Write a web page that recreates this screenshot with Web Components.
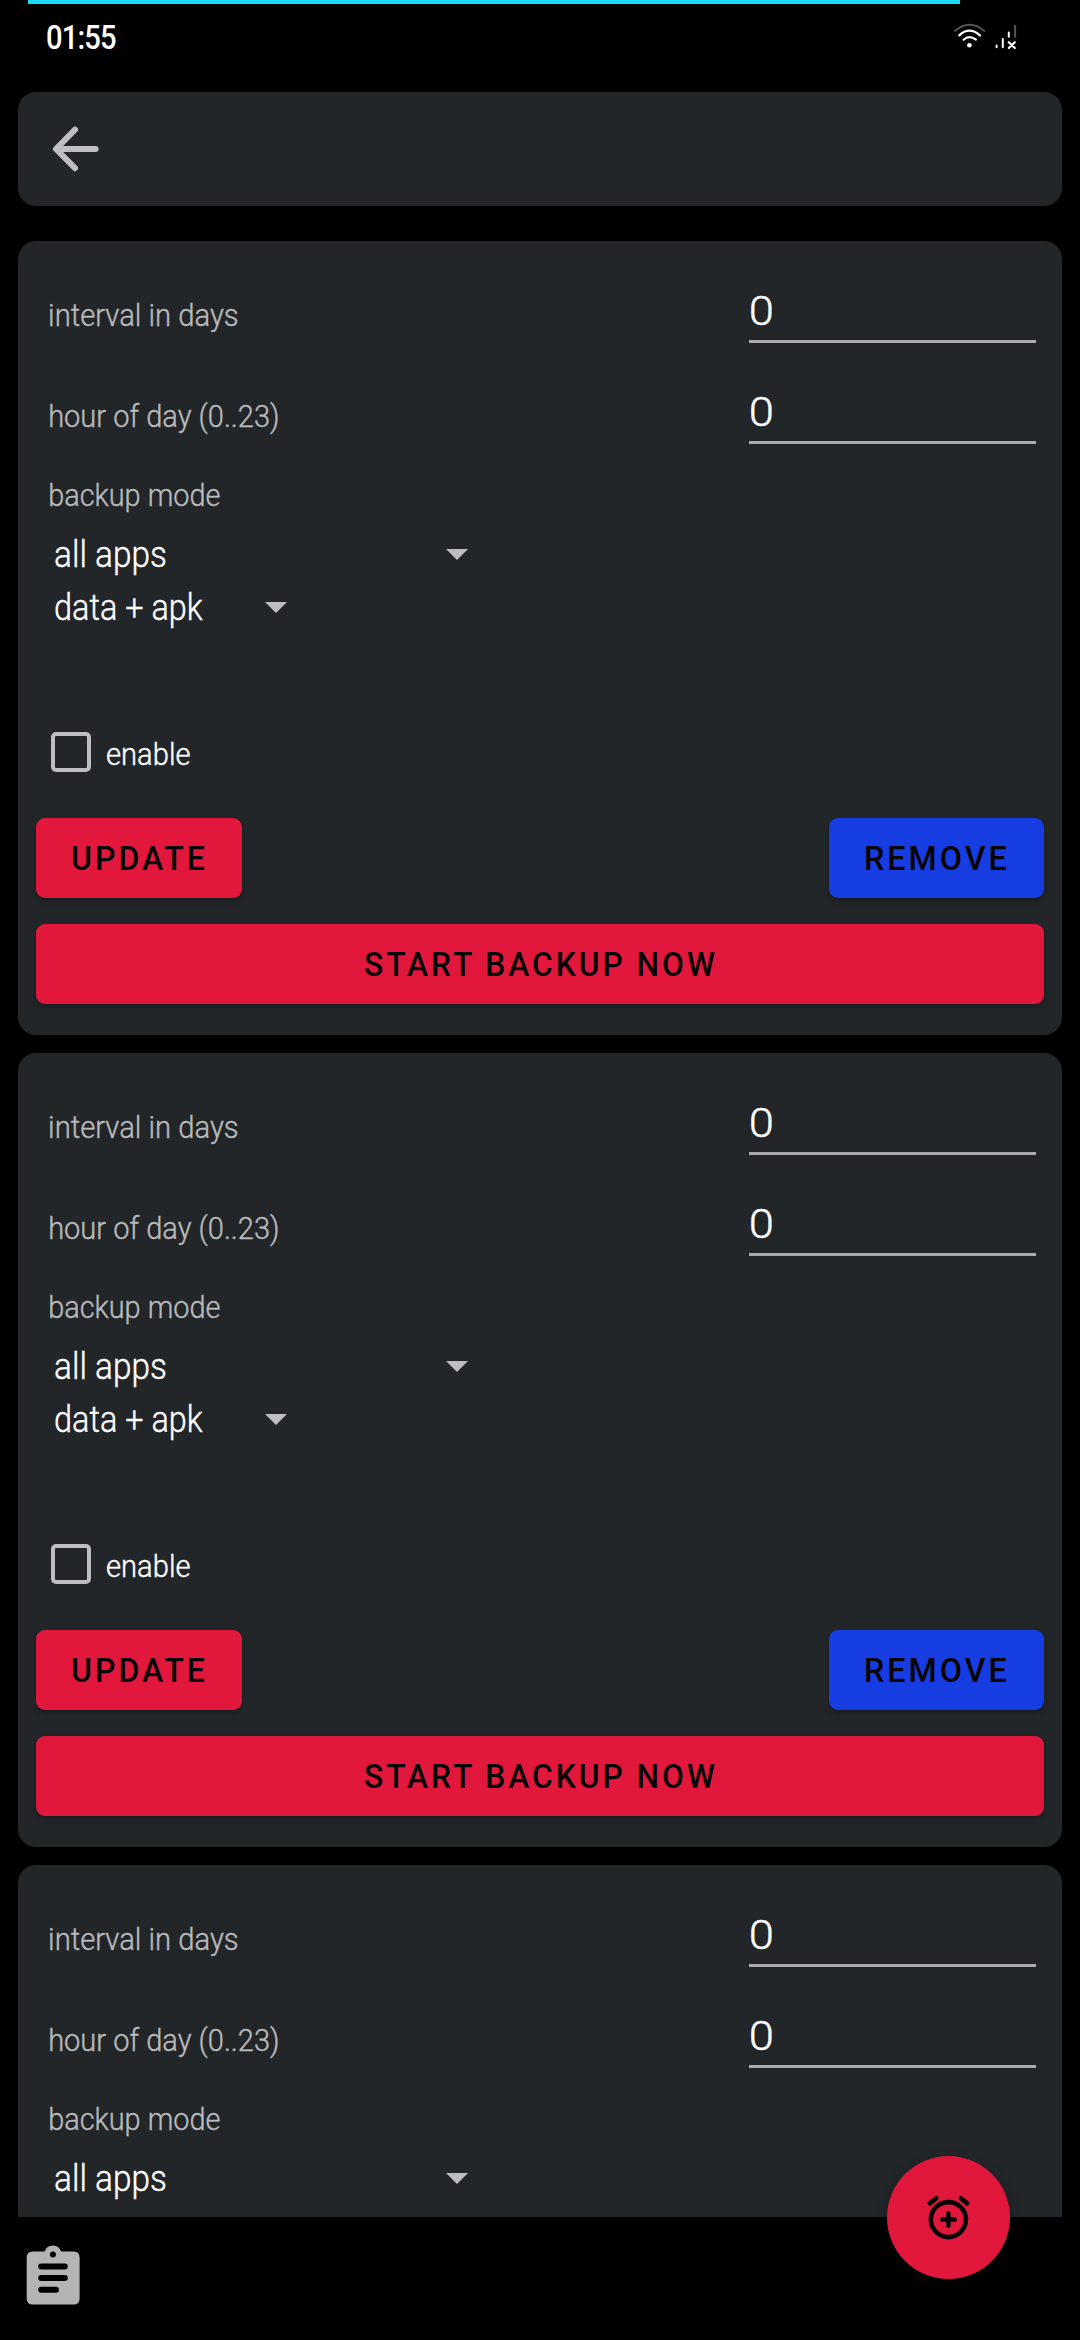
<!DOCTYPE html>
<html lang="en">
<head>
<meta charset="utf-8">
<title>Backup schedules</title>
<style>
html,body{margin:0;background:#000;height:2340px;overflow:hidden}
body{font-family:Roboto,"Liberation Sans",sans-serif}
</style>
</head>
<body>
<schedule-app></schedule-app>
<script>
const define = (name, html, setup) => {
  const tpl = document.createElement('template');
  tpl.innerHTML = html;
  customElements.define(name, class extends HTMLElement {
    connectedCallback() {
      if (this.shadowRoot) return;
      this.attachShadow({mode: 'open'}).appendChild(tpl.content.cloneNode(true));
      if (setup) setup(this, this.shadowRoot);
    }
  });
};

/* One line of text whose ink fills exactly `width` pixels. */
const pen = document.createElement('canvas').getContext('2d');
customElements.define('fit-text', class extends HTMLElement {
  connectedCallback() {
    if (this.shadowRoot) return;
    const size = +this.getAttribute('size'), weight = this.getAttribute('weight') || 300;
    const line = this.getAttribute('line'), width = +this.getAttribute('width');
    const spacing = this.getAttribute('spacing') || 0, text = this.getAttribute('text');
    pen.font = `${weight} ${size}px Roboto, "Liberation Sans", sans-serif`;
    pen.letterSpacing = spacing + 'px';
    const m = pen.measureText(text);
    const left = -m.actualBoundingBoxLeft;
    const k = width / (m.actualBoundingBoxRight + m.actualBoundingBoxLeft);
    this.attachShadow({mode: 'open'}).innerHTML = `<style>
      :host{display:block;flex:none;width:${width}px;height:${line}px}
      span{display:inline-block;white-space:pre;font:${weight} ${size}px/${line}px Roboto,"Liberation Sans",sans-serif;
        letter-spacing:${spacing}px;-webkit-text-stroke:var(--ink,0) currentColor;
        transform-origin:0 0;transform:translateX(${-left * k}px) scaleX(${k})}
    </style><span></span>`;
    this.shadowRoot.querySelector('span').textContent = text;
  }
});

define('status-bar', `<style>
  :host{display:block;height:92px;color:#fff}
  .progress{height:4px;margin:0 120px 0 28px;background:#1adcf8}
  .row{display:flex;justify-content:space-between;align-items:flex-start;padding:14px 59px 0 47px}
  svg{display:block;margin-top:1px}
</style>
<div class="progress"></div>
<div class="row">
  <fit-text text="01:55" size="33" weight="500" line="40" width="69" spacing="-1"></fit-text>
  <svg width="71" height="36" viewBox="950 19 71 36" fill="none" stroke="#fff" stroke-width="2" stroke-linecap="round">
    <path d="M955 30.9Q969.3 18.6 984.3 30.9" stroke="#555"/>
    <path d="M959.3 35.4Q969.3 26 979.9 35.4M963.6 39.7Q969.3 34.6 975.9 39.7" stroke-width="2.2"/>
    <circle cx="969.4" cy="45.3" r="2.3" fill="#fff" stroke="none"/>
    <path d="M996.6 45.5V47.3M1002.8 39V47.3M1008.8 32.5V36.8"/>
    <path d="M1015.1 25V37.6" stroke="#555" stroke-linecap="butt"/>
    <path d="M1008.8 42.2L1014.8 48M1014.8 42.2L1008.8 48" stroke-width="2.2"/>
  </svg>
</div>`);

define('tool-bar', `<style>
  :host{display:flex;align-items:center;height:114px;margin:0 18px 35px;padding-left:32px;box-sizing:border-box;background:#232629;border-radius:18px}
</style>
<svg width="52" height="52" viewBox="50 123 52 52" fill="none" stroke="#bfbfc3" stroke-width="6" stroke-linecap="round" stroke-linejoin="round"><path d="M75 129.6L56 149L75 168.2M57 149H95.6"/></svg>`);

define('number-field', `<style>
  :host{display:flex;align-items:flex-end;justify-content:space-between;height:101px;padding:0 26px 0 31.5px;color:#b9babb}
  .label{padding-bottom:7px}
  .value{width:287px;box-sizing:border-box;padding:0 0 5px 2px;border-bottom:3px solid #a9abac;color:#fff}
</style>
<div class="label"></div>
<div class="value"><fit-text text="0" size="41" line="48" width="21"></fit-text></div>`,
(host, root) => {
  root.querySelector('.label').innerHTML =
    `<fit-text text="${host.getAttribute('label')}" size="31" line="40" width="${host.getAttribute('width')}"></fit-text>`;
});

define('drop-down', `<style>
  :host{display:flex;align-items:center;height:53px;padding-left:37px;color:#fff}
  slot{display:block;padding-top:3px}
  svg{display:block}
</style>
<slot></slot><svg width="22" height="11"><path d="M0 0H22L11 11Z" fill="#bdbebf"/></svg>`,
(host, root) => { root.querySelector('svg').style.marginLeft = host.getAttribute('gap') + 'px'; });

define('check-box', `<style>
  :host{display:flex;height:40px;padding-left:33px;color:#fff}
  i{width:40px;height:40px;box-sizing:border-box;border:4.5px solid #bdbebf;border-radius:5px;margin-right:16px}
  slot{display:block;padding-top:3px}
</style><i></i><slot></slot>`);

define('raised-button', `<style>
  :host{display:flex;align-items:center;justify-content:center;height:80px;padding-top:2px;box-sizing:border-box;border-radius:9px;
    background:var(--tone,#e1183c);color:#080406;box-shadow:0 3px 5px rgba(0,0,0,.28);--ink:0}
</style><slot></slot>`);

define('schedule-card', `<style>
  :host{display:block;flex:none;height:794px;box-sizing:border-box;padding-top:1px;background:#232629;border-radius:18px;color:#b9babb;--ink:.4px}
  .mode{padding:32px 0 11.5px 31.5px}
  :host([cropped]){height:352px;border-radius:18px 18px 0 0}
  :host([cropped]) .rest{display:none}
  check-box{margin-top:98px}
  .actions{display:flex;justify-content:space-between;margin:46px 18px 26px}
  .update{width:206px}
  .remove{width:215px;--tone:#163de2}
  .start{margin:0 18px}
</style>
<number-field label="interval in days" width="187"></number-field>
<number-field label="hour of day (0..23)" width="227.5"></number-field>
<div class="mode"><fit-text text="backup mode" size="31" line="40" width="169.5"></fit-text></div>
<drop-down gap="280"><fit-text text="all apps" size="36" line="53" width="110.7"></fit-text></drop-down>
<div class="rest">
  <drop-down gap="61.5"><fit-text text="data + apk" size="36" line="53" width="148"></fit-text></drop-down>
  <check-box><fit-text text="enable" size="31" line="40" width="82.5"></fit-text></check-box>
  <div class="actions">
    <raised-button class="update"><fit-text text="UPDATE" size="32.5" weight="500" line="40" width="131.5" spacing="3"></fit-text></raised-button>
    <raised-button class="remove"><fit-text text="REMOVE" size="32.5" weight="500" line="40" width="140.5" spacing="3"></fit-text></raised-button>
  </div>
  <raised-button class="start"><fit-text text="START BACKUP NOW" size="32.5" weight="500" line="40" width="351" spacing="3"></fit-text></raised-button>
</div>`);

define('alarm-fab', `<style>
  :host{display:block;width:123px;height:123px;border-radius:50%;background:#e1183c;box-shadow:0 5px 12px rgba(0,0,0,.35)}
  svg{display:block}
</style>
<svg width="123" height="123" viewBox="887 2156 123 123" fill="none" stroke="#080406" stroke-width="4.6" stroke-linecap="round">
  <circle cx="948.4" cy="2219.6" r="17.5"/><path d="M942.3 2219.6H954.7M948.4 2213.4V2225.8M929.9 2203.4L936.3 2198.3M960.9 2198.3L967.2 2203.4"/>
</svg>`);

define('bottom-bar', `<style>
  :host{display:block;height:123px;box-sizing:border-box;padding:26px 0 0 24px}
  svg{display:block}
</style>
<svg width="60" height="66" viewBox="24 2243 60 66">
  <path fill="#b4b4b4" fill-rule="evenodd" d="M32.7 2251.6H44.7A8.6 8.6 0 0 1 61.1 2251.6H73.7Q79.6 2251.6 79.6 2257.6V2298.6Q79.6 2304.6 73.7 2304.6H32.7Q26.7 2304.6 26.7 2298.6V2257.6Q26.7 2251.6 32.7 2251.6Z"/>
  <circle cx="52.9" cy="2254.6" r="3" fill="#000"/>
  <path d="M41.2 2266.4H64.8M41.2 2278H64.8M41.2 2289.8H56" stroke="#000" stroke-width="6" stroke-linecap="round"/>
</svg>`);

define('schedule-app', `<style>
  :host{display:flex;flex-direction:column;position:relative;width:1080px;height:2340px;background:#000;overflow:hidden}
  .list{display:flex;flex-direction:column;gap:18px;height:1976px;padding:0 18px}
  alarm-fab{position:absolute;left:887px;top:2156px}
</style>
<status-bar></status-bar>
<tool-bar></tool-bar>
<div class="list"><schedule-card></schedule-card><schedule-card></schedule-card><schedule-card cropped></schedule-card></div>
<bottom-bar></bottom-bar>
<alarm-fab></alarm-fab>`);
</script>
</body>
</html>
